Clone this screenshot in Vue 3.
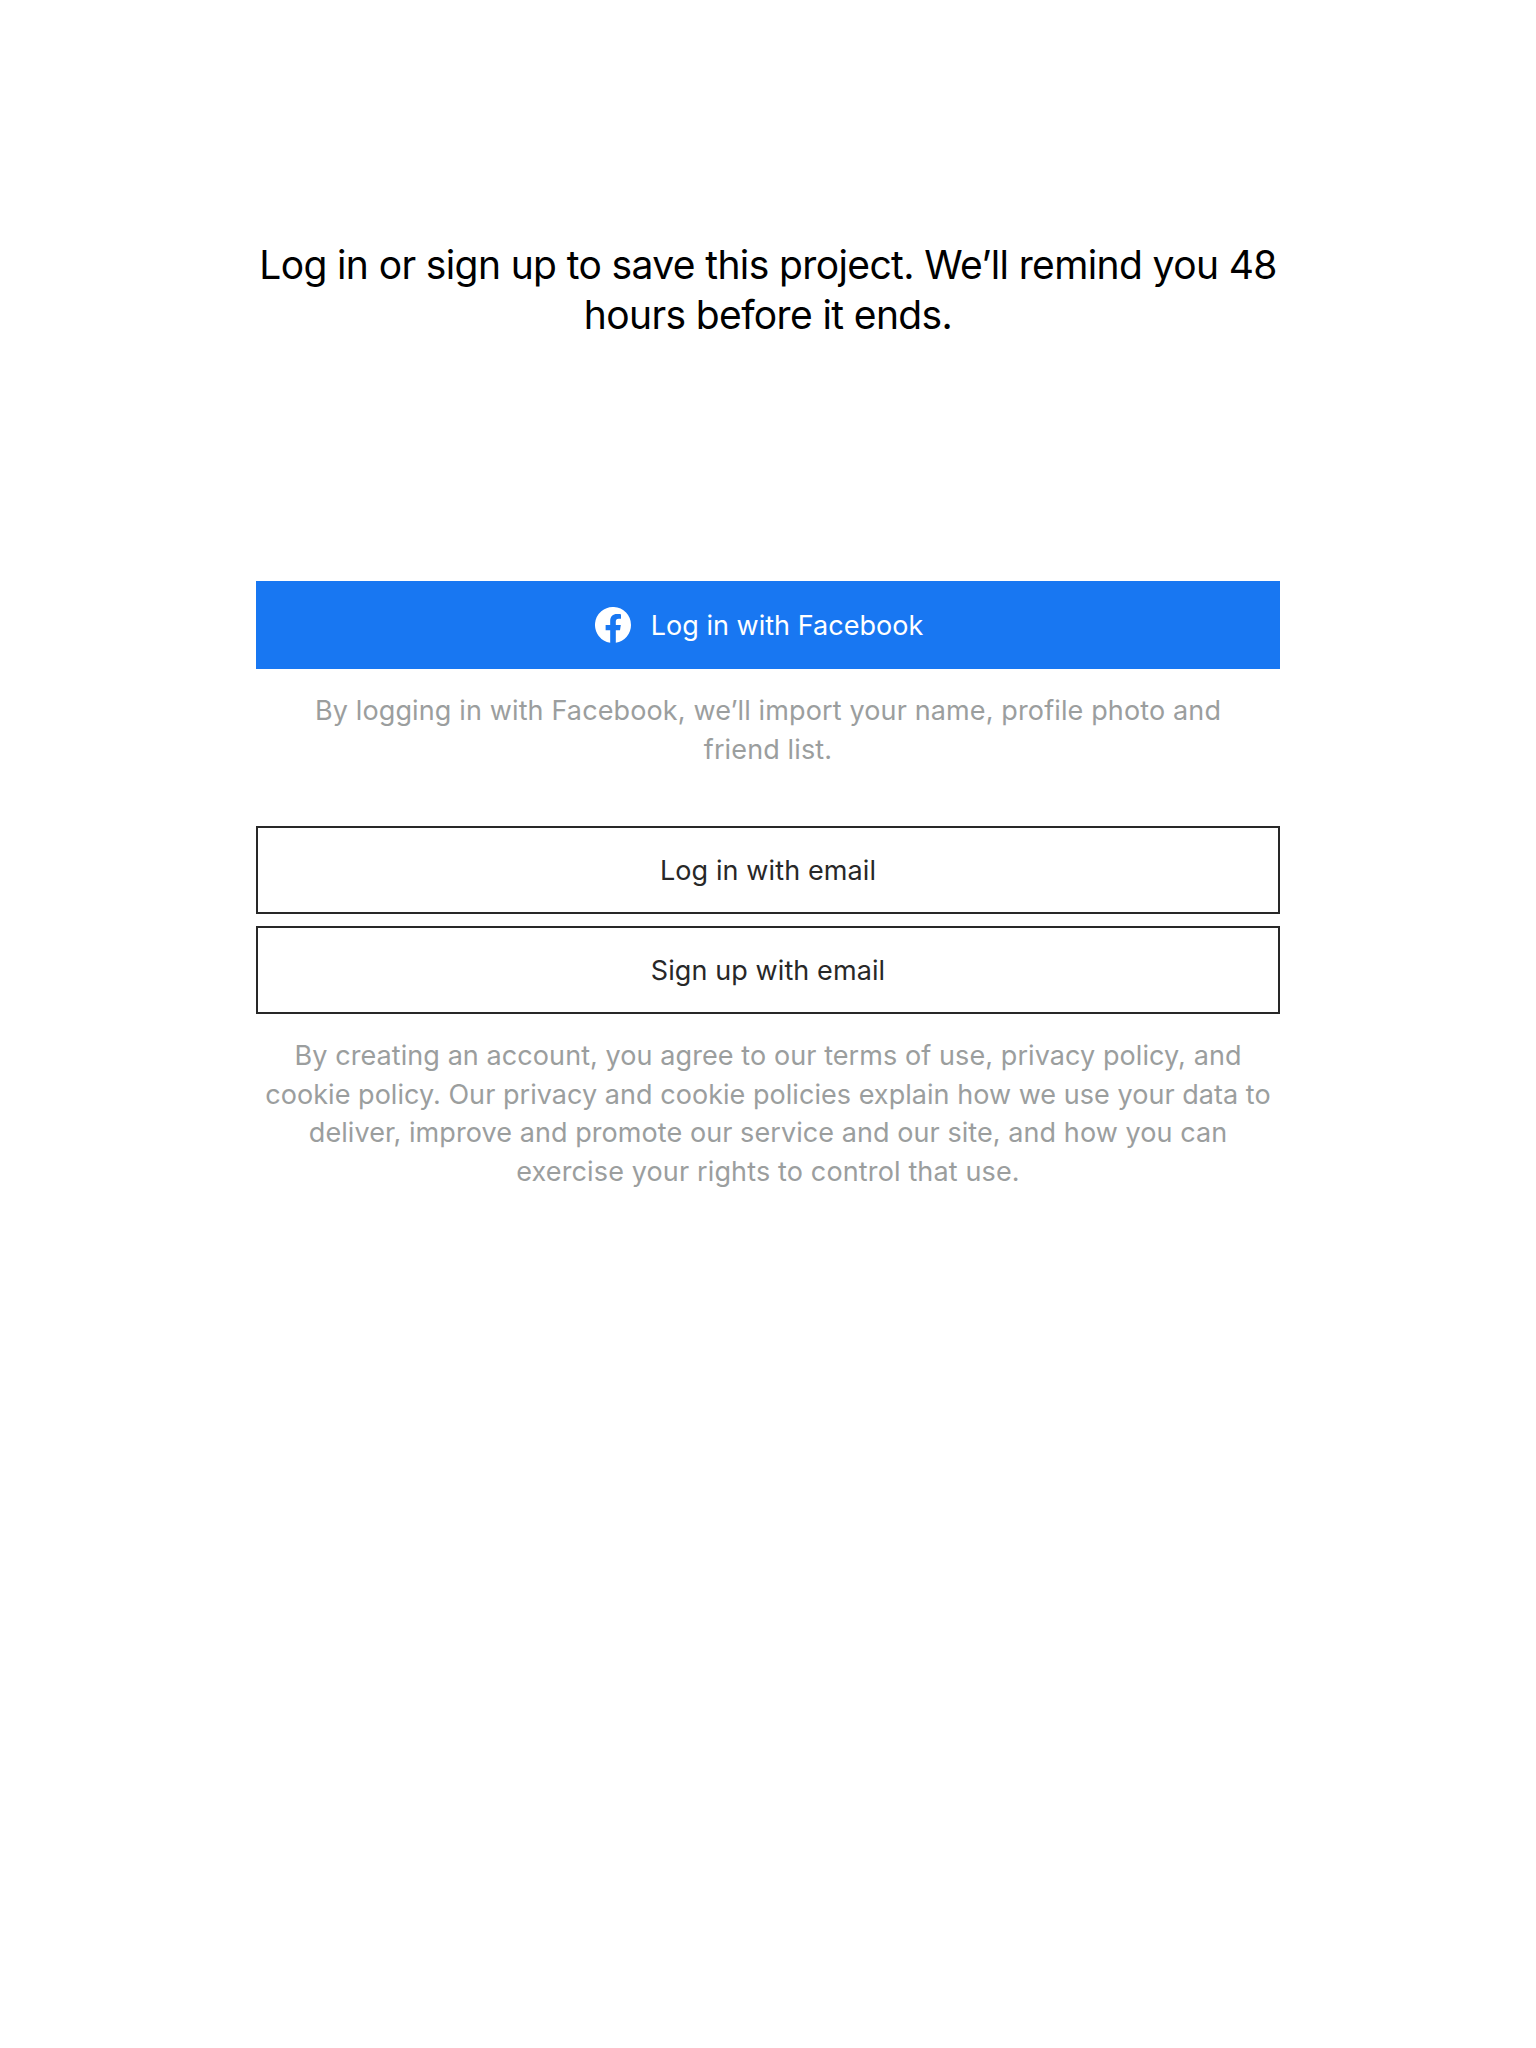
<script setup>
const title = ['Log in or sign up to save this project. We’ll remind you 48', 'hours before it ends.']
const facebookNote = ['By logging in with Facebook, we’ll import your name, profile photo and', 'friend list.']
const terms = [
  'By creating an account, you agree to our terms of use, privacy policy, and',
  'cookie policy. Our privacy and cookie policies explain how we use your data to',
  'deliver, improve and promote our service and our site, and how you can',
  'exercise your rights to control that use.',
]
</script>

<template>
  <main class="page">
    <h1 class="title"><span v-for="(l, i) in title" :key="i">{{ l }}</span></h1>
    <button class="btn facebook">
      <svg class="logo" viewBox="0 0 36 36" aria-hidden="true">
        <path fill="#fff" d="M36 18A18 18 0 1 0 15.19 35.78V23.2h-4.57V18h4.57v-3.97c0-4.51 2.69-7 6.8-7 1.97 0 4.03.35 4.03.35v4.43h-2.27c-2.24 0-2.94 1.39-2.94 2.81V18h5l-.8 5.2h-4.2v12.58A18 18 0 0 0 36 18z" />
      </svg>
      <span class="label fb-label">Log in with Facebook</span>
    </button>
    <p class="note"><span v-for="(l, i) in facebookNote" :key="i">{{ l }}</span></p>
    <div class="email">
      <button class="btn outline"><span class="label">Log in with email</span></button>
      <button class="btn outline"><span class="label">Sign up with email</span></button>
    </div>
    <p class="note terms"><span v-for="(l, i) in terms" :key="i" :class="'terms-' + i">{{ l }}</span></p>
  </main>
</template>

<style>
body { margin: 0; background: #fff; }
</style>

<style scoped>
.page {
  box-sizing: border-box;
  width: 1024px;
  min-height: 2048px;
  margin: 0 auto;
  padding-top: 240px;
  font-family: Inter, sans-serif;
  text-align: center;
}
.title {
  margin: 0;
  height: 341px;
  font-size: 39px;
  font-weight: 400;
  line-height: 50px;
  letter-spacing: -0.62px;
  color: #000;
}
.title span, .note span { display: block; white-space: nowrap; }
.btn {
  box-sizing: border-box;
  display: flex;
  align-items: center;
  justify-content: center;
  width: 100%;
  height: 88px;
  padding: 0;
  border: 0;
  border-radius: 0;
  font: 400 27px/36px Inter, sans-serif;
  letter-spacing: 0.1px;
  white-space: nowrap;
}
.label { padding-top: 2px; }
.facebook { gap: 20px; padding-right: 18px; background: #1877f2; color: #fff; }
.fb-label { letter-spacing: 0.03px; }
.logo { width: 36px; height: 36px; }
.note {
  margin: 23px 0 0;
  font-size: 27px;
  line-height: 38.5px;
  letter-spacing: 0.13px;
  color: #9b9e9e;
}
.email {
  display: flex;
  flex-direction: column;
  gap: 12px;
  margin-top: 57px;
}
.outline { border: 2px solid #282828; background: #fff; color: #282828; }
.terms-0 { letter-spacing: 0.08px; }
.terms-1 { letter-spacing: 0.04px; }
.terms-2 { letter-spacing: 0.07px; }
.terms-3 { letter-spacing: 0.14px; }
</style>
